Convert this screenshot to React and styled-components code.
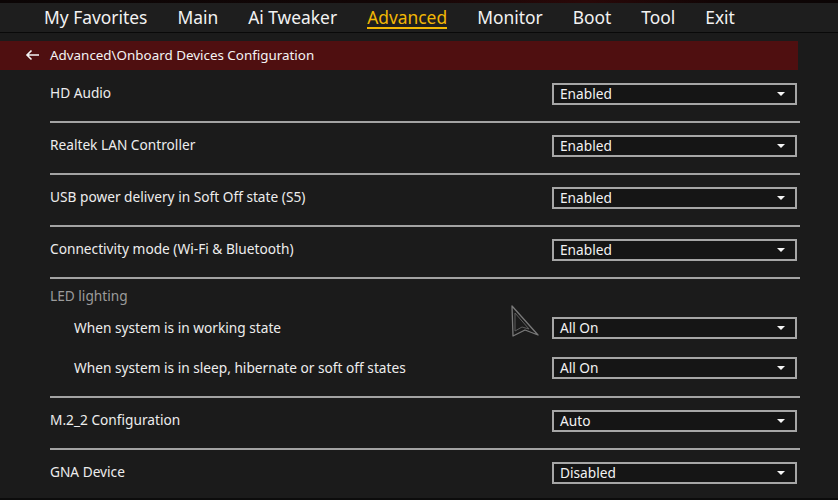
import React from "react";
import styled, { createGlobalStyle } from "styled-components";

const Global = createGlobalStyle`
  html, body { margin: 0; padding: 0; background: #1b1b1b; }
  body { font-family: "Noto Sans", "Open Sans", sans-serif; }
`;

const Page = styled.div`
  position: relative;
  width: 838px;
  height: 500px;
  overflow: hidden;
  background: #1b1b1b;
  color: #ececec;
  font-family: "Noto Sans", "Open Sans", sans-serif;
  border-bottom: 2px solid #0c0c0c;
  box-sizing: border-box;
`;

const TopStrip = styled.div`
  height: 3px;
  background: linear-gradient(90deg, #0b0505 0%, #120606 45%, #2a0808 70%, #120505 85%, #0b0505 100%);
`;

const Nav = styled.nav`
  height: 29px;
  display: flex;
  align-items: center;
  gap: 30px;
  padding-left: 44px;
  background: #1e1e1e;
  border-bottom: 1px solid #090909;
`;

const NavItem = styled.span`
  position: relative;
  font-size: 17.4px;
  line-height: 29px;
  color: ${(p) => (p.$active ? "#f2b705" : "#f2f2f2")};
  &::after {
    content: "";
    display: ${(p) => (p.$active ? "block" : "none")};
    position: absolute;
    left: 0;
    right: 0;
    bottom: 3px;
    height: 2px;
    background: #f2b705;
  }
`;

const Body = styled.div`
  padding-top: 8px;
`;

const Crumb = styled.div`
  width: 798px;
  height: 29px;
  display: flex;
  align-items: center;
  gap: 10px;
  padding-left: 25px;
  padding-bottom: 2px;
  box-sizing: border-box;
  background: #4f0f10;
  font-size: 13.4px;
  color: #f4f4f4;
`;

const BackIcon = styled.svg`
  width: 15px;
  height: 12px;
  display: block;
  margin-top: 1px;
`;

const List = styled.div`
  margin-top: 1px;
  margin-left: 50px;
  width: 750px;
`;

const Row = styled.div`
  height: 50px;
  display: flex;
  align-items: flex-start;
  justify-content: space-between;
  padding-top: 12px;
  box-sizing: border-box;
`;

const Label = styled.span`
  font-size: 13.7px;
  line-height: 20px;
  color: #ededed;
`;

const Divider = styled.div`
  height: 2px;
  background: #a3a3a3;
`;

const Group = styled.div`
  height: 117px;
  padding-top: 7px;
  box-sizing: border-box;
`;

const GroupTitle = styled.div`
  font-size: 13.7px;
  line-height: 20px;
  margin-bottom: 2px;
  color: #9b9b9b;
`;

const SubRow = styled.div`
  height: 40px;
  display: flex;
  align-items: center;
  justify-content: space-between;
  padding-left: 24px;
`;

const Select = styled.div`
  width: 245px;
  height: 22px;
  box-sizing: border-box;
  border: 2px solid #a6a6a6;
  background: #151515;
  display: flex;
  align-items: center;
  justify-content: space-between;
  padding: 0 10px 2px 6px;
  margin-right: 3px;
  font-size: 13.7px;
  color: #f2f2f2;
`;

const Caret = styled.span`
  width: 0;
  height: 0;
  border-left: 4px solid transparent;
  border-right: 4px solid transparent;
  border-top: 4px solid #f5f5f5;
  margin-top: 2px;
`;

const Pointer = styled.svg`
  position: absolute;
  left: 510px;
  top: 304px;
  width: 30px;
  height: 34px;
`;

const Dropdown = ({ value }) => (
  <Select>
    <span>{value}</span>
    <Caret />
  </Select>
);

const navItems = ["My Favorites", "Main", "Ai Tweaker", "Advanced", "Monitor", "Boot", "Tool", "Exit"];

const topRows = [
  ["HD Audio", "Enabled"],
  ["Realtek LAN Controller", "Enabled"],
  ["USB power delivery in Soft Off state (S5)", "Enabled"],
  ["Connectivity mode (Wi-Fi & Bluetooth)", "Enabled"],
];

const ledRows = [
  ["When system is in working state", "All On"],
  ["When system is in sleep, hibernate or soft off states", "All On"],
];

export default function App() {
  return (
    <Page>
      <Global />
      <TopStrip />
      <Nav>
        {navItems.map((n) => (
          <NavItem key={n} $active={n === "Advanced"}>{n}</NavItem>
        ))}
      </Nav>
      <Body>
        <Crumb>
          <BackIcon viewBox="0 0 15 12">
            <path d="M14 6H2M6.5 1.5L2 6l4.5 4.5" stroke="#f4f4f4" strokeWidth="1.6" fill="none" />
          </BackIcon>
          <span>Advanced\Onboard Devices Configuration</span>
        </Crumb>
        <List>
          {topRows.map(([l, v]) => (
            <React.Fragment key={l}>
              <Row>
                <Label>{l}</Label>
                <Dropdown value={v} />
              </Row>
              <Divider />
            </React.Fragment>
          ))}
          <Group>
            <GroupTitle>LED lighting</GroupTitle>
            {ledRows.map(([l, v]) => (
              <SubRow key={l}>
                <Label>{l}</Label>
                <Dropdown value={v} />
              </SubRow>
            ))}
          </Group>
          <Divider />
          <Row>
            <Label>M.2_2 Configuration</Label>
            <Dropdown value="Auto" />
          </Row>
          <Divider />
          <Row>
            <Label>GNA Device</Label>
            <Dropdown value="Disabled" />
          </Row>
        </List>
      </Body>
      <Pointer viewBox="0 0 30 34">
        <path d="M2 2 L28 31 L15 26 L3 32 Z" fill="none" stroke="#7a7a7a" strokeWidth="1.3" strokeLinejoin="round" />
        <path d="M5 9 L19 25 L12 23 L5 27 Z" fill="none" stroke="#5e5e5e" strokeWidth="1" strokeLinejoin="round" />
      </Pointer>
    </Page>
  );
}
